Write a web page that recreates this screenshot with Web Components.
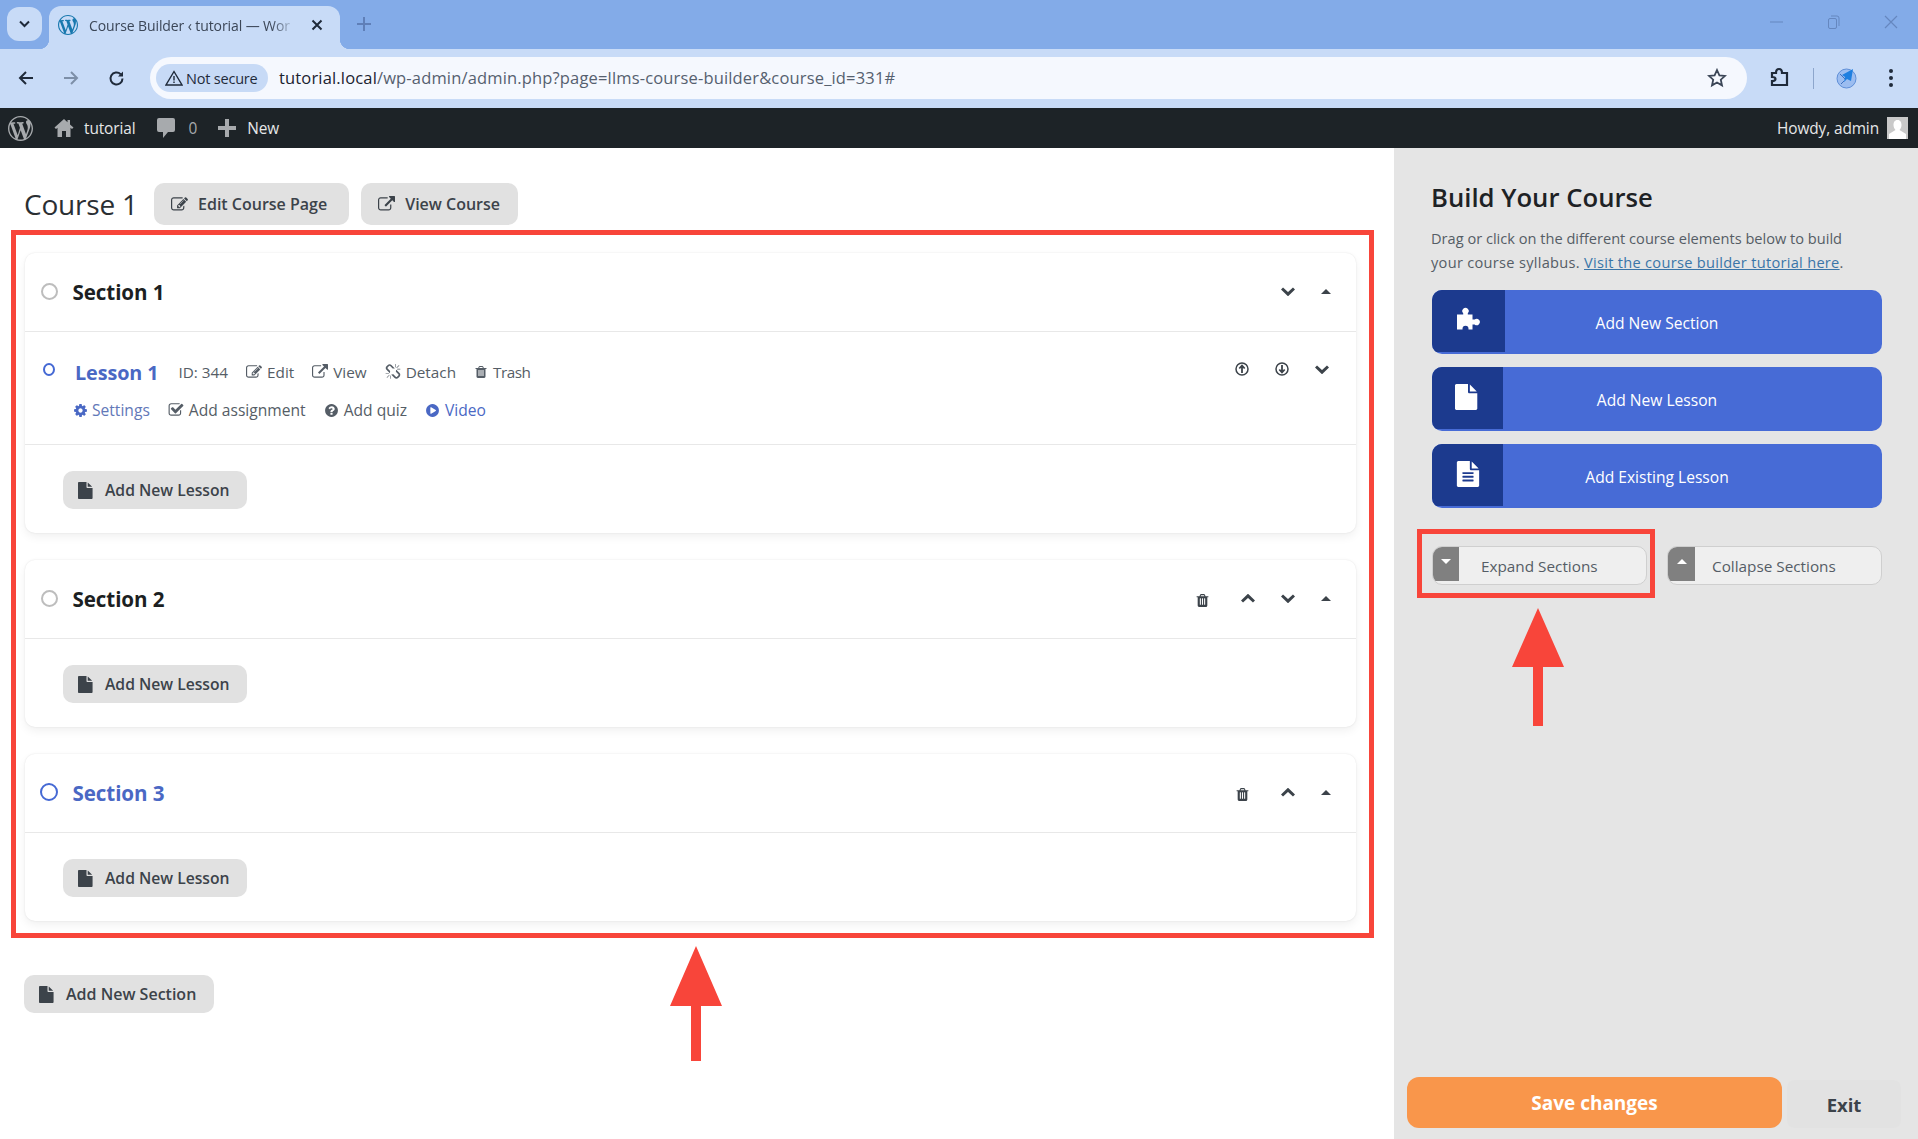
<!DOCTYPE html>
<html lang="en"><head><meta charset="utf-8"><title>Course Builder</title>
<style>
html,body{margin:0;padding:0;height:1139px;overflow:hidden;background:#fff;font-family:"Open Sans","Noto Sans",sans-serif}
body{display:flex;flex-direction:column;width:1918px}
</style></head><body>
<browser-tabs></browser-tabs>
<browser-toolbar></browser-toolbar>
<wp-adminbar></wp-adminbar>
<builder-page>
  <builder-main slot="main">
    <course-section title="Section 1" actions="down">
      <course-lesson></course-lesson>
    </course-section>
    <course-section title="Section 2" actions="trash up down"></course-section>
    <course-section title="Section 3" actions="trash up" active></course-section>
  </builder-main>
  <builder-side slot="side"></builder-side>
</builder-page>
<script>
const P={
file:"M1024 512v-472q22 14 36 28l408 408q14 14 28 36h-472zm-128 32q0 40 28 68t68 28h544v1056q0 40-28 68t-68 28h-1344q-40 0-68-28t-28-68v-1600q0-40 28-68t68-28h800v544z",
filetext:"M1596 476q14 14 28 36h-472v-472q22 14 36 28zm-476 164h544v1056q0 40-28 68t-68 28h-1344q-40 0-68-28t-28-68v-1600q0-40 28-68t68-28h800v544q0 40 28 68t68 28zm160 736v-64q0-14-9-23t-23-9h-704q-14 0-23 9t-9 23v64q0 14 9 23t23 9h704q14 0 23-9t9-23zm0-256v-64q0-14-9-23t-23-9h-704q-14 0-23 9t-9 23v64q0 14 9 23t23 9h704q14 0 23-9t9-23zm0-256v-64q0-14-9-23t-23-9h-704q-14 0-23 9t-9 23v64q0 14 9 23t23 9h704q14 0 23-9t9-23z",
trash:"M704 1376v-704q0-14-9-23t-23-9h-64q-14 0-23 9t-9 23v704q0 14 9 23t23 9h64q14 0 23-9t9-23zm256 0v-704q0-14-9-23t-23-9h-64q-14 0-23 9t-9 23v704q0 14 9 23t23 9h64q14 0 23-9t9-23zm256 0v-704q0-14-9-23t-23-9h-64q-14 0-23 9t-9 23v704q0 14 9 23t23 9h64q14 0 23-9t9-23zm-544-992h448l-48-117q-7-9-17-11h-317q-10 2-17 11zm928 32v64q0 14-9 23t-23 9h-96v948q0 83-47 143.500t-113 60.500h-832q-66 0-113-58.500t-47-141.500v-952h-96q-14 0-23-9t-9-23v-64q0-14 9-23t23-9h309l70-167q15-37 54-63t79-26h320q40 0 79 26t54 63l70 167h309q14 0 23 9t9 23z",
cog:"M1152 896q0-106-75-181t-181-75-181 75-75 181 75 181 181 75 181-75 75-181zm512-109v222q0 12-8 23t-20 13l-185 28q-19 54-39 91 35 50 107 138 10 12 10 25t-9 23q-27 37-99 108t-94 71q-12 0-26-9l-138-108q-44 23-91 38-16 136-29 186-7 28-36 28h-222q-14 0-24.500-8.500t-11.500-21.500l-28-184q-49-16-90-37l-141 107q-10 9-25 9-14 0-25-11-126-114-165-168-7-10-7-23 0-12 8-23 15-21 51-66.500t54-70.500q-27-50-41-99l-183-27q-13-2-21-12.500t-8-23.500v-222q0-12 8-23t19-13l186-28q14-46 39-92-40-57-107-138-10-12-10-24 0-10 9-23 26-36 98.500-107.500t94.500-71.500q13 0 26 10l138 107q44-23 91-38 16-136 29-186 7-28 36-28h222q14 0 24.500 8.500t11.500 21.500l28 184q49 16 90 37l142-107q9-9 24-9 13 0 25 10 129 119 165 170 7 8 7 22 0 12-8 23-15 21-51 66.500t-54 70.500q26 50 41 98l183 28q13 2 21 12.500t8 23.500z",
question:"M1024 1376v-192q0-14-9-23t-23-9h-192q-14 0-23 9t-9 23v192q0 14 9 23t23 9h192q14 0 23-9t9-23zm256-672q0-88-55.500-163t-138.500-116-170-41q-243 0-371 213-15 24 8 42l132 100q7 6 19 6 16 0 25-12 53-68 86-92 34-24 86-24 48 0 85.500 26t37.500 59q0 38-20 61t-68 45q-63 28-115.500 86.500t-52.500 125.500v36q0 14 9 23t23 9h192q14 0 23-9t9-23q0-19 21.500-49.500t54.500-49.500q32-18 49-28.500t46-35 44.500-48 28-60.500 12.500-81zm384 192q0 209-103 385.500t-279.500 279.500-385.500 103-385.500-103-279.500-279.500-103-385.500 103-385.500 279.500-279.500 385.500-103 385.500 103 279.500 279.500 103 385.500z",
play:"M896 128q209 0 385.500 103t279.500 279.500 103 385.500-103 385.500-279.500 279.500-385.500 103-385.500-103-279.500-279.500-103-385.500 103-385.500 279.500-279.500 385.500-103zm384 823q32-18 32-55t-32-55l-544-320q-31-19-64-1-32 19-32 56v640q0 37 32 56 16 8 32 8 17 0 32-9z",
edit:"M888 1184l116-116-152-152-116 116v56h96v96h56zm440-720q-16-16-33 1l-350 350q-17 17-1 33t33-1l350-350q17-17 1-33zm80 594v190q0 119-84.500 203.500t-203.500 84.500h-832q-119 0-203.500-84.500t-84.500-203.500v-832q0-119 84.500-203.500t203.500-84.500h832q63 0 117 25 15 7 18 23 3 17-9 29l-49 49q-14 14-32 8-23-6-45-6h-832q-66 0-113 47t-47 113v832q0 66 47 113t113 47h832q66 0 113-47t47-113v-126q0-13 9-22l64-64q15-15 35-7t20 29zm-96-738l288 288-672 672h-288v-288zm444 132l-92 92-288-288 92-92q28-28 68-28t68 28l152 152q28 28 28 68t-28 68z",
external:"M1408 928v320q0 119-84.500 203.500t-203.500 84.500h-832q-119 0-203.500-84.500t-84.500-203.500v-832q0-119 84.500-203.500t203.500-84.500h704q14 0 23 9t9 23v64q0 14-9 23t-23 9h-704q-66 0-113 47t-47 113v832q0 66 47 113t113 47h832q66 0 113-47t47-113v-320q0-14 9-23t23-9h64q14 0 23 9t9 23zm384-864v512q0 26-19 45t-45 19-45-19l-176-176-652 652q-10 10-23 10t-23-10l-114-114q-10-10-10-23t10-23l652-652-176-176q-19-19-19-45t19-45 45-19h512q26 0 45 19t19 45z",
check:"M1472 930v318q0 119-84.500 203.500t-203.500 84.500h-832q-119 0-203.500-84.500t-84.500-203.500v-832q0-119 84.500-203.500t203.500-84.500h832q63 0 117 25 15 7 18 23 3 17-9 29l-49 49q-10 10-23 10-3 0-9-2-23-6-45-6h-832q-66 0-113 47t-47 113v832q0 66 47 113t113 47h832q66 0 113-47t47-113v-254q0-13 9-22l64-64q10-10 23-10 6 0 12 3 20 8 20 29zm231-489l-814 814q-24 24-57 24t-57-24l-430-430q-24-24-24-57t24-57l110-110q24-24 57-24t57 24l263 263 647-647q24-24 57-24t57 24l110 110q24 24 24 57t-24 57z",
unlink:"M503 1271l-256 256q-10 9-23 9-12 0-23-9-9-10-9-23t9-23l256-256q10-9 23-9t23 9q9 10 9 23t-9 23zm169 41v320q0 14-9 23t-23 9-23-9-9-23v-320q0-14 9-23t23-9 23 9 9 23zm-224-224q0 14-9 23t-23 9h-320q-14 0-23-9t-9-23 9-23 23-9h320q14 0 23 9t9 23zm1264 128q0 120-85 203l-147 146q-83 83-203 83-121 0-204-85l-334-335q-21-21-42-56l239-18 273 274q27 27 68 27.500t68-26.500l147-146q28-28 28-67 0-40-28-68l-274-275 18-239q35 21 56 42l336 336q84 86 84 204zm-617-724l-239 18-273-274q-28-28-68-28-39 0-68 27l-147 146q-28 28-28 67 0 40 28 68l274 274-18 240q-35-21-56-42l-336-336q-84-86-84-204 0-120 85-203l147-146q83-83 203-83 121 0 204 85l334 335q21 21 42 56zm633 84q0 14-9 23t-23 9h-320q-14 0-23-9t-9-23 9-23 23-9h320q14 0 23 9t9 23zm-544-544v320q0 14-9 23t-23 9-23-9-9-23v-320q0-14 9-23t23-9 23 9 9 23zm407 151l-256 256q-11 9-23 9t-23-9q-9-10-9-23t9-23l256-256q10-9 23-9t23 9q9 10 9 23t-9 23z"
};
const WP="M20 10c0-5.510-4.490-10-10-10C4.480 0 0 4.490 0 10c0 5.520 4.480 10 10 10 5.510 0 10-4.480 10-10zM7.780 15.370L4.370 6.220c.55-.02 1.170-.08 1.170-.08.5-.06.44-1.130-.06-1.110 0 0-1.450.11-2.370.11-.18 0-.37 0-.58-.01C4.120 2.690 6.890 1.060 10 1.060c2.320 0 4.430.88 6.020 2.340-.68-.11-1.650.39-1.650 1.580 0 .74.45 1.360.9 2.100.35.61.55 1.360.55 2.460 0 1.490-1.400 5-1.400 5l-3.030-8.370c.54-.02.82-.17.82-.17.5-.05.44-1.250-.06-1.220 0 0-1.440.12-2.380.12-.87 0-2.330-.12-2.330-.12-.5-.03-.56 1.200-.06 1.220l.92.080 1.260 3.410zM17.410 10c.24-.64.74-1.870.43-4.250.7 1.290 1.050 2.710 1.050 4.250 0 3.290-1.730 6.240-4.400 7.780.97-2.590 1.940-5.200 2.920-7.780zM6.100 18.090C3.120 16.650 1.110 13.530 1.110 10c0-1.300.23-2.480.72-3.590C3.250 10.300 4.670 14.200 6.100 18.090zm4.030-6.630l2.580 6.980c-.86.29-1.740.45-2.710.45-.82 0-1.620-.12-2.370-.34.84-2.380 1.680-4.740 2.500-7.090z";
const ic=(n,s,extra='')=>`<svg width="${s}" height="${s}" viewBox="0 0 1792 1792" fill="currentColor" style="flex:none;${extra}"><path d="${P[n]}"/></svg>`;
const chev=(dir)=>`<svg width="14" height="9" viewBox="0 0 14 9" fill="none" stroke="currentColor" stroke-width="3" style="flex:none"><polyline points="${dir=='up'?'1,7.500 7,1.800 13,7.500':'1,1.500 7,7.200 13,1.500'}"/></svg>`;
const caret=(dir,c='currentColor')=>`<svg width="10" height="5" viewBox="0 0 10 5" fill="${c}" style="flex:none"><path d="${dir=='up'?'M5 0L10 5H0Z':'M5 5L10 0H0Z'}"/></svg>`;
const def=(name,html)=>customElements.define(name,class extends HTMLElement{
  constructor(){super();this.attachShadow({mode:'open'})}
  connectedCallback(){this.shadowRoot.innerHTML=typeof html=='function'?html(this):html}
});

def('browser-tabs',`<style>
:host{display:flex;flex:none;height:49px;background:#83abe8;position:relative;align-items:flex-end;font-size:14px;color:#3b4657}
.chip{width:35px;height:34px;background:#c8dbf7;border-radius:12px;margin:0 7px 8px 7px;display:flex;align-items:center;justify-content:center;color:#1f2a3a}
.tab{width:291px;height:43px;background:#c8dbf7;border-radius:12px 12px 0 0;display:flex;align-items:center;position:relative;box-sizing:border-box;padding:0 0 5px 9px}
.tab::after{content:"";position:absolute;right:-10px;bottom:0;width:10px;height:10px;background:radial-gradient(circle at 100% 0,transparent 10px,#c8dbf7 10.500px)}
.tab::before{content:"";position:absolute;left:-10px;bottom:0;width:10px;height:10px;background:radial-gradient(circle at 0 0,transparent 10px,#c8dbf7 10.500px)}
.t{margin-left:11px;width:207px;white-space:nowrap;overflow:hidden;letter-spacing:-.1px;-webkit-mask-image:linear-gradient(90deg,#000 88%,transparent);mask-image:linear-gradient(90deg,#000 88%,transparent)}
.x{margin-left:15px;display:flex}
.plus{margin-left:17px;margin-bottom:18px;display:flex;color:#5f7fb8}
.win{margin-left:auto;display:flex;align-items:center;gap:44px;padding-right:20px;margin-bottom:20px;color:#6587bf}
</style>
<div class="chip"><svg width="11" height="8" viewBox="0 0 11 8" fill="none" stroke="currentColor" stroke-width="2"><polyline points="1,1.500 5.500,6 10,1.500"/></svg></div>
<div class="tab"><svg width="20" height="20" viewBox="0 0 20 20" fill="#1878ae"><path d="${WP}"/></svg><span class="t">Course Builder ‹ tutorial — Wor</span>
<span class="x"><svg width="12" height="12" viewBox="0 0 12 12" stroke="#1f2a3a" stroke-width="2"><path d="M1.500 1.500L10.500 10.500M10.500 1.500L1.500 10.500"/></svg></span></div>
<div class="plus"><svg width="14" height="14" viewBox="0 0 14 14" stroke="currentColor" stroke-width="2"><path d="M7 0V14M0 7H14"/></svg></div>
<div class="win"><svg width="13" height="2" viewBox="0 0 13 2"><path d="M0 1H13" stroke="currentColor"/></svg>
<svg width="13" height="14" viewBox="0 0 13 14" fill="none" stroke="currentColor"><rect x="1.500" y="3.500" width="8" height="10" rx="1.500"/><path d="M4 1H10Q12 1 12 3V11"/></svg>
<svg width="14" height="14" viewBox="0 0 14 14" stroke="currentColor" stroke-width="1.200"><path d="M1 1L13 13M13 1L1 13"/></svg></div>`);

def('browser-toolbar',`<style>
:host{display:flex;flex:none;height:59px;background:#c8dbf7;align-items:center;box-sizing:border-box;padding-bottom:1px}
.nav{display:flex;width:150px;align-items:center;padding-left:18px;box-sizing:border-box;gap:29px;color:#1f2a3a}
.bar{width:1597px;height:42px;border-radius:21px;background:#f5f8fe;display:flex;align-items:center;padding-left:6px;box-sizing:border-box}
.chip{height:28px;width:112px;border-radius:14px;background:#c7daf6;display:flex;align-items:center;box-sizing:border-box;padding-left:9px;gap:3px;font-size:14.500px;color:#1f2a3a;letter-spacing:-.2px;white-space:nowrap}
.url{margin-left:11px;margin-bottom:1px;font-size:16.500px;color:#55606f;white-space:nowrap;letter-spacing:.16px}
.url b{font-weight:400;color:#1b2330}
.star{margin-left:auto;margin-right:20px;display:flex}
.r{display:flex;align-items:center;margin-left:22px}
</style>
<div class="nav"><svg width="16" height="16" viewBox="0 0 16 16" fill="none" stroke="currentColor" stroke-width="2"><path d="M15 8H2M8 2L2 8L8 14"/></svg>
<svg width="16" height="16" viewBox="0 0 16 16" fill="none" stroke="#7d8fa8" stroke-width="2"><path d="M1 8H14M8 2L14 8L8 14"/></svg>
<svg width="17" height="17" viewBox="0 0 17 17" fill="none" stroke="currentColor" stroke-width="2"><path d="M14.500 8.500A6 6 0 1 1 12.700 4.200"/><path d="M15 1.500V6.500H10Z" fill="currentColor" stroke="none"/></svg></div>
<div class="bar"><div class="chip"><svg width="18" height="16" viewBox="0 0 18 16" fill="none" stroke="#1f2a3a" stroke-width="1.400"><path d="M9 1.500L17 15H1Z"/><path d="M9 6V10.500M9 11.500V13"/></svg><span>Not secure</span></div>
<span class="url"><b>tutorial.local</b>/wp-admin/admin.php?page=llms-course-builder&amp;course_id=331#</span>
<span class="star"><svg width="20" height="20" viewBox="0 0 20 20" fill="none" stroke="#3b4657" stroke-width="1.800"><path d="M10 2l2.400 5.300 5.600.6-4.200 3.800 1.200 5.700L10 14.500l-5 2.900 1.200-5.700L2 7.900l5.600-.6z"/></svg></span></div>
<div class="r"><svg width="20" height="22" viewBox="0 0 20 22" fill="none" stroke="#1f2a3a" stroke-width="2.200"><path d="M3 6H7Q7 2 10 2Q13 2 13 6H18V18H3V14Q6.500 14 6.500 12Q6.500 10 3 10Z"/></svg></div>
<div style="width:1px;height:21px;background:#8da6cc;margin-left:24px"></div>
<div style="margin-left:22px;display:flex"><svg width="21" height="21" viewBox="0 0 21 21"><circle cx="10.500" cy="10.500" r="9.500" fill="#9cbdf0" stroke="#5f8fd8"/><path d="M17 1L15 13L11 11L8 14L9 9L6 7Z" fill="#1e7fe0"/><path d="M4 6L9 11M5 16L8 13" stroke="#3f6fbe"/></svg></div>
<div style="margin-left:32px;display:flex;flex-direction:column;gap:3px"><i style="width:4px;height:4px;border-radius:50%;background:#1f2a3a"></i><i style="width:4px;height:4px;border-radius:50%;background:#1f2a3a"></i><i style="width:4px;height:4px;border-radius:50%;background:#1f2a3a"></i></div>`);

def('wp-adminbar',`<style>
:host{display:flex;flex:none;height:40px;background:#1d2327;color:#e6e7e8;align-items:center;font-size:15.400px;box-sizing:border-box;padding-left:8px;letter-spacing:-.1px}
svg{flex:none}
.g{color:#a7aaad;fill:#a7aaad}
.r{margin-left:auto;display:flex;align-items:center;padding-right:10px}
.av{width:21px;height:22px;background:#c9c9c9;margin-left:8px;display:block}
</style>
<svg class="g" width="25" height="25" viewBox="0 0 20 20"><path d="${WP}"/></svg>
<svg class="g" style="margin-left:21px" width="20" height="20" viewBox="0 0 20 20"><path d="M10 1L0.500 9.500L2 11L3.500 9.800V19H8V13H12V19H16.500V9.800L18 11L19.500 9.500L16 6.500V2H13.500V4.300Z"/></svg>
<span style="margin-left:10px">tutorial</span>
<svg class="g" style="margin-left:22px" width="18" height="20" viewBox="0 0 18 20"><path d="M2 0H16Q18 0 18 2V12Q18 14 16 14H11L6 20V14H2Q0 14 0 12V2Q0 0 2 0Z"/></svg>
<span style="margin-left:13px;color:#a7aaad">0</span>
<svg class="g" style="margin-left:21px" width="18" height="18" viewBox="0 0 18 18"><path d="M7 0H11V7H18V11H11V18H7V11H0V7H7Z"/></svg>
<span style="margin-left:11px">New</span>
<div class="r"><span>Howdy, admin</span><svg class="av" viewBox="0 0 21 22"><path d="M10.500 3C13.500 3 14.500 5.500 14.500 8C14.500 10 13.500 12 12.500 13L19 17V22H2V17L8.500 13C7.500 12 6.500 10 6.500 8C6.500 5.500 7.500 3 10.500 3Z" fill="#fff"/></svg></div>`);

def('builder-page',`<style>
:host{display:flex;flex:1;min-height:0}
::slotted([slot=main]){width:1394px;flex:none}
::slotted([slot=side]){flex:1}
</style><slot name="main"></slot><slot name="side"></slot>`);

def('gray-btn',h=>`<style>
:host{display:inline-flex;align-items:center;height:${h.getAttribute('h')||38}px;background:#e1e1e1;border-radius:10px;box-sizing:border-box;color:#3c434a;font-weight:600;font-size:${h.getAttribute('fs')||16}px;padding:0 ${h.getAttribute('pr')||17}px 0 ${h.getAttribute('pl')||16}px;gap:${h.getAttribute('gap')||10}px;white-space:nowrap}
</style>${ic(h.getAttribute('icon'),h.getAttribute('size')||17)}<slot></slot>`);

def('annot-arrow',h=>{const w=+h.getAttribute('w'),ht=+h.getAttribute('ht'),hd=+h.getAttribute('head'),s=+h.getAttribute('shaft');
return `<style>:host{display:block;width:${w}px;height:${ht}px;line-height:0}</style><svg width="${w}" height="${ht}" viewBox="0 0 ${w} ${ht}" fill="#f8453a"><path d="M${w/2} 0L${w} ${hd}H${w/2+s/2}V${ht}H${w/2-s/2}V${hd}H0Z"/></svg>`});

def('course-section',h=>{const acts=(h.getAttribute('actions')||'').split(' ');const active=h.hasAttribute('active');
const a=acts.map(x=>x=='trash'?`<span class="tr">${ic('trash',15)}</span>`:`<span class="ch">${chev(x)}</span>`).join('');
return `<style>
:host{display:block;background:#fff;border-radius:10px;box-shadow:0 0 2px rgba(0,0,0,.1),0 4px 10px rgba(0,0,0,.06);margin-bottom:27px}
:host(:last-child){margin-bottom:0}
.head{height:78px;border-bottom:1px solid #e8e8e8;display:flex;align-items:center;padding:0 25px 0 16px;color:#3c434a}
.radio{width:13px;height:13px;border:2px solid ${active?'#4569d4':'#bdbdbd'};border-radius:50%;margin-bottom:2px;box-sizing:content-box;flex:none}
h3{margin:0 0 1px 14.500px;font-size:20.600px;font-weight:700;color:${active?'#4a68c4':'#1c1f22'};letter-spacing:-.1px;flex:1}
.tr{display:flex;margin-right:31px;margin-top:2px}
.ch{display:flex;margin-right:26px;margin-bottom:2px;width:14px;justify-content:center}
.ct{display:flex;margin-bottom:2px}
.foot{box-sizing:border-box;height:88px;padding:26px 0 0 38px}
</style><div class="head"><span class="radio" style="${active?'width:14px;height:14px;margin-left:-1px':''}"></span><h3>${h.getAttribute('title')}</h3>${a}<span class="ct">${caret('up')}</span></div>
<slot></slot><div class="foot"><gray-btn icon="file" size="17" fs="15.700" pl="15"><span>Add New Lesson</span></gray-btn></div>`});

def('course-lesson',`<style>
:host{display:block;height:112px;border-bottom:1px solid #e8e8e8;box-sizing:content-box;font-size:15.600px;color:#555d66;white-space:nowrap}
.r1{display:flex;align-items:center;height:24px;padding:28px 27px 0 18px;font-size:15.300px}
.dot{width:8px;height:9px;border:2px solid #4569d4;border-radius:50%;margin-right:20px;margin-bottom:6px;flex:none}
h4{margin:0 20px 0 0;font-size:19.800px;font-weight:700;color:#4a68c4;letter-spacing:-.1px}
.it{display:inline-flex;align-items:center;gap:5px;margin-right:18px}
.tx{letter-spacing:-.5px}
.acts{margin-left:auto;display:flex;align-items:center;gap:26px;margin-bottom:6px;color:#3c434a}
.r2{display:flex;align-items:center;height:24px;padding:14px 0 0 48px}
.b{color:#4a68c4}.bb{color:#6278b8;margin-left:-1px}
</style>
<div class="r1"><span class="dot"></span><h4>Lesson 1</h4><span class="it">ID: 344</span>
<span class="it">${ic('edit',16)}<span>Edit</span></span><span class="it">${ic('external',16)}<span>View</span></span><span class="it">${ic('unlink',16)}<span>Detach</span></span><span class="it">${ic('trash',14)}<span class="tx">Trash</span></span>
<span class="acts"><svg width="14" height="14" viewBox="0 0 14 14" fill="none" stroke="currentColor"><circle cx="7" cy="7" r="6" stroke-width="1.500"/><path d="M7 11V4M4.300 6.500L7 3.500L9.700 6.500" stroke-width="1.800"/></svg><svg width="14" height="14" viewBox="0 0 14 14" fill="none" stroke="currentColor"><circle cx="7" cy="7" r="6" stroke-width="1.500"/><path d="M7 3V10M4.300 7.500L7 10.500L9.700 7.500" stroke-width="1.800"/></svg>${chev('down')}</span></div>
<div class="r2"><span class="it"><span class="b" style="display:flex">${ic('cog',15)}</span><span class="bb">Settings</span></span><span class="it">${ic('check',16)}<span>Add assignment</span></span><span class="it">${ic('question',15)}<span>Add quiz</span></span><span class="it b">${ic('play',15)}<span>Video</span></span></div>`);

def('builder-main',`<style>
:host{display:block;position:relative;background:#fff;box-sizing:border-box}
.head{display:flex;align-items:center;padding:35px 0 0 24px;height:77px;box-sizing:border-box}
h1{margin:0 21px 0 0;font-size:28px;font-weight:400;color:#2b2f33;letter-spacing:-.2px;width:109px;white-space:nowrap}
.box{margin:5px 0 0 11px;width:1363px;border:5px solid #f8453a;box-sizing:border-box;padding:18px 13px 12px 9px}
.foot{padding:37px 0 0 24px}
.a{position:absolute;left:670px;top:798px}
gray-btn+gray-btn{margin-left:12px}
</style>
<div class="head"><h1>Course 1</h1><gray-btn icon="edit" h="42" size="17" pl="17" pr="22"><span>Edit Course Page</span></gray-btn><gray-btn icon="external" h="42" size="17" pl="17" pr="18"><span>View Course</span></gray-btn></div>
<div class="box"><slot></slot></div>
<div class="foot"><gray-btn icon="file" size="17" pr="18" pl="15"><span>Add New Section</span></gray-btn></div>
<annot-arrow class="a" w="52" ht="115" head="60" shaft="10"></annot-arrow>`);

def('big-add',h=>`<style>
:host{display:grid;height:64px;background:#476bd6;border-radius:10px;color:#fff;overflow:hidden;font-size:15.600px;box-sizing:border-box}
.i,.t{grid-area:1/1}
.i{background:#1c3a8e;width:${h.getAttribute('w')}px;height:62px;display:flex;align-items:center;justify-content:center;padding-bottom:${h.getAttribute('pb')||2}px;box-sizing:border-box}
.t{display:flex;align-items:center;justify-content:center;padding-top:1px}
</style><div class="i"><slot name="i"></slot></div><div class="t"><slot></slot></div>`);

def('side-toggle',h=>`<style>
:host{display:flex;width:215px;height:39px;background:#efefef;border:1px solid #cfcfcf;border-radius:10px;box-sizing:border-box;overflow:hidden;color:#555d66;font-size:15.300px;white-space:nowrap}
.i{width:${h.getAttribute('w')||26}px;height:34px;background:#808080;display:flex;align-items:center;justify-content:center;flex:none;padding-bottom:6px;box-sizing:border-box}
.t{display:flex;align-items:center;margin-left:${h.getAttribute('gap')||22}px}
</style><div class="i">${caret(h.getAttribute('dir'),'#fff')}</div><div class="t"><slot></slot></div>`);

def('builder-side',`<style>
:host{display:flex;flex-direction:column;background:#e5e5e5;box-sizing:border-box;padding:0 36px 11px 38px;position:relative;height:991px}
h2{margin:33px 0 0 -1px;font-size:25.700px;font-weight:600;color:#1e2225;line-height:34px;white-space:nowrap}
p{margin:11px 0 0 -1px;font-size:14.600px;line-height:24px;color:#555d66;white-space:nowrap}
.l2{letter-spacing:.29px}
a{color:#3a75a8}
.list{display:flex;flex-direction:column;gap:13px;margin-top:16px}
.row{display:flex;align-items:flex-start;margin:21px 0 0 -15px}
.red{border:5px solid #f8453a;box-sizing:border-box;padding:12px 3px 8px 10px;width:238px;height:69px}
.row>side-toggle{margin:17px 0 0 12px}
.ar{margin:10px 0 0 80px}
.bot{margin-top:auto;display:flex;align-items:flex-end;margin-left:-25px;margin-right:-20px;gap:5px}
.save{width:375px;height:51px;background:#f9964b;border-radius:12px;color:#fff;font-size:19px;font-weight:700;display:flex;align-items:center;justify-content:center}
.exit{width:114px;height:48px;background:#e2e2e2;border-radius:8px;color:#3c434a;font-size:18.500px;font-weight:700;display:flex;align-items:center;justify-content:center}
svg{display:block}
</style>
<h2>Build Your Course</h2>
<p>Drag or click on the different course elements below to build<br><span class="l2">your course syllabus. <a href="#">Visit the course builder tutorial here</a>.</span></p>
<div class="list">
<big-add w="73" pb="5"><svg slot="i" width="24" height="23" viewBox="0 0 24 23" fill="#fff"><path fill-rule="evenodd" d="M0 7.500H6.200V6.300A3.200 3.200 0 1 1 10.800 6.300V7.500H15.500V12.500H17.600A3.200 3.200 0 1 1 17.600 17.500H15.500V22.500H11.500V21.800A3 3 0 1 0 5.500 21.800V22.500H0Z"/></svg>Add New Section</big-add>
<big-add w="71"><span slot="i" style="display:flex;color:#fff">${ic('file',26)}</span>Add New Lesson</big-add>
<big-add w="71"><span slot="i" style="display:flex;color:#fff">${ic('filetext',26)}</span>Add Existing Lesson</big-add>
</div>
<div class="row"><div class="red"><side-toggle dir="down">Expand Sections</side-toggle></div><side-toggle dir="up" w="27" gap="17">Collapse Sections</side-toggle></div>
<annot-arrow class="ar" w="52" ht="118" head="59" shaft="10"></annot-arrow>
<div class="bot"><div class="save">Save changes</div><div class="exit">Exit</div></div>`);
</script>
</body></html>
